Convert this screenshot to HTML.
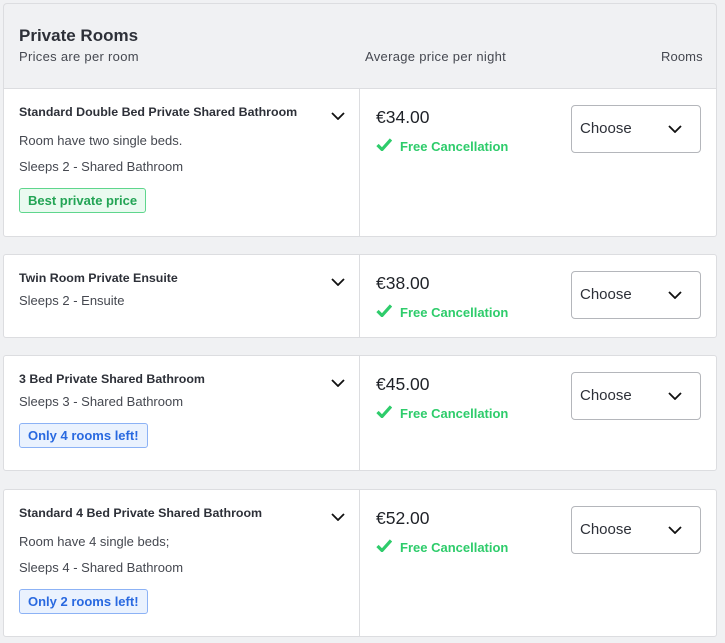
<!DOCTYPE html><html><head><style>
body{margin:0;width:725px;height:643px;background:#f0f1f3;font-family:"Liberation Sans",sans-serif;position:relative;overflow:hidden;color:#2d3038}
.a{position:absolute}
.hdr{left:3px;top:3px;width:714px;height:85px;border:1px solid #dcdde0;border-bottom:none;border-radius:4px 4px 0 0;background:#f0f1f3;box-sizing:border-box}
.card{left:3px;width:714px;background:#fff;border:1px solid #dcdde0;border-radius:3px;box-sizing:border-box}
.div{left:355px;top:0;bottom:0;width:1px;background:#dcdde0}
.t{left:15px;font-size:12.4px;font-weight:bold;color:#2d3038}
.d{left:15px;font-size:13px;color:#454850;letter-spacing:0}
.b{left:15px;height:25px;line-height:23px;padding:0 8px;box-sizing:border-box;font-size:13px;font-weight:bold;border-radius:3px}
.g{background:#eafaf0;border:1px solid #5fd68d;color:#23a455}
.bl{background:#eaf2fe;border:1px solid #8cb2f5;color:#2969e0}
.p{left:372px;font-size:17.5px;color:#1f2228}
.fc{left:396px;font-size:13px;font-weight:bold;color:#2ecc6b}
.sel{left:567px;width:130px;height:48px;border:1px solid #b4b6bb;border-radius:4px;box-sizing:border-box}
.sel span{position:absolute;left:8px;top:14px;font-size:15px;color:#2d3038}
</style></head><body>
<div class="a hdr">
<div class="a" style="left:15px;top:22px;font-size:17px;font-weight:bold">Private Rooms</div>
<div class="a" style="left:15px;top:45px;font-size:13px;color:#454850;letter-spacing:.3px">Prices are per room</div>
<div class="a" style="left:361px;top:45px;font-size:13px;color:#454850;letter-spacing:.3px">Average price per night</div>
<div class="a" style="left:657px;top:45px;font-size:13px;color:#454850;letter-spacing:.1px">Rooms</div>
</div>
<svg width="0" height="0" style="position:absolute"><defs>
<symbol id="ch" viewBox="0 0 14 8"><path d="M1 1l6 6 6-6" fill="none" stroke="#111" stroke-width="1.8"/></symbol>
<symbol id="ck" viewBox="0 0 16 13"><path d="M1.5 7l4.5 4.5 9-10" fill="none" stroke="#2ecc6b" stroke-width="3.2"/></symbol>
</defs></svg>

<div class="a card" style="top:88px;height:149px;border-radius:0 0 3px 3px">
<div class="a div"></div>
<div class="a t" style="top:16px">Standard Double Bed Private Shared Bathroom</div>
<svg class="a" style="left:327px;top:23px" width="14" height="8"><use href="#ch"/></svg>
<div class="a d" style="top:44px">Room have two single beds.</div>
<div class="a d" style="top:70px">Sleeps 2 - Shared Bathroom</div>
<div class="a b g" style="top:99px">Best private price</div>
<div class="a p" style="top:18px">€34.00</div>
<svg class="a" style="left:372px;top:49px" width="16" height="13"><use href="#ck"/></svg>
<div class="a fc" style="top:50px">Free Cancellation</div>
<div class="a sel" style="top:16px"><span>Choose</span><svg class="a" style="left:96px;top:19px" width="14" height="8"><use href="#ch"/></svg></div>
</div>

<div class="a card" style="top:254px;height:84px">
<div class="a div"></div>
<div class="a t" style="top:16px">Twin Room Private Ensuite</div>
<svg class="a" style="left:327px;top:23px" width="14" height="8"><use href="#ch"/></svg>
<div class="a d" style="top:38px">Sleeps 2 - Ensuite</div>
<div class="a p" style="top:18px">€38.00</div>
<svg class="a" style="left:372px;top:49px" width="16" height="13"><use href="#ck"/></svg>
<div class="a fc" style="top:50px">Free Cancellation</div>
<div class="a sel" style="top:16px"><span>Choose</span><svg class="a" style="left:96px;top:19px" width="14" height="8"><use href="#ch"/></svg></div>
</div>

<div class="a card" style="top:355px;height:116px">
<div class="a div"></div>
<div class="a t" style="top:16px">3 Bed Private Shared Bathroom</div>
<svg class="a" style="left:327px;top:23px" width="14" height="8"><use href="#ch"/></svg>
<div class="a d" style="top:38px">Sleeps 3 - Shared Bathroom</div>
<div class="a b bl" style="top:67px">Only 4 rooms left!</div>
<div class="a p" style="top:18px">€45.00</div>
<svg class="a" style="left:372px;top:49px" width="16" height="13"><use href="#ck"/></svg>
<div class="a fc" style="top:50px">Free Cancellation</div>
<div class="a sel" style="top:16px"><span>Choose</span><svg class="a" style="left:96px;top:19px" width="14" height="8"><use href="#ch"/></svg></div>
</div>

<div class="a card" style="top:489px;height:148px">
<div class="a div"></div>
<div class="a t" style="top:16px">Standard 4 Bed Private Shared Bathroom</div>
<svg class="a" style="left:327px;top:23px" width="14" height="8"><use href="#ch"/></svg>
<div class="a d" style="top:44px">Room have 4 single beds;</div>
<div class="a d" style="top:70px">Sleeps 4 - Shared Bathroom</div>
<div class="a b bl" style="top:99px">Only 2 rooms left!</div>
<div class="a p" style="top:18px">€52.00</div>
<svg class="a" style="left:372px;top:49px" width="16" height="13"><use href="#ck"/></svg>
<div class="a fc" style="top:50px">Free Cancellation</div>
<div class="a sel" style="top:16px"><span>Choose</span><svg class="a" style="left:96px;top:19px" width="14" height="8"><use href="#ch"/></svg></div>
</div>
</body></html>
